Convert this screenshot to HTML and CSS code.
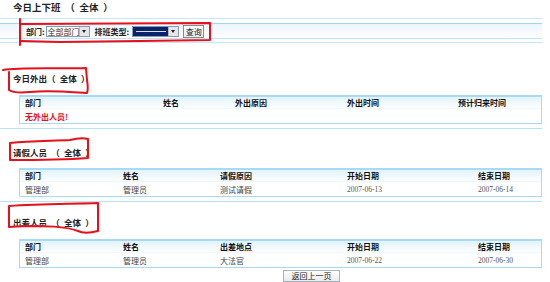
FILE: index.html
```html
<!DOCTYPE html>
<html lang="zh-CN">
<head>
    <meta charset="UTF-8">
    <title>今日上下班</title>
    <link rel="stylesheet" href="styles.css">
</head>
<body>
    <div class="page">
        <div class="page-title">今日上下班&ensp;（&ensp;全体&ensp;）</div>

        <div class="toolbar">
            <div class="toolbar-inner">
                <span class="lbl">部门:</span>
                <span class="select sel-dept"><span class="sel-text">全部部门</span><span class="sel-arrow"></span></span>
                <span class="lbl lbl-type">排班类型:</span>
                <span class="select sel-type"><span class="sel-text sel-active"><i class="dash"></i></span><span class="sel-arrow"></span></span>
                <span class="btn btn-query">查询</span>
            </div>
        </div>

        <!-- 今日外出 -->
        <div class="sec-title sec-out">今日外出（&ensp;全体&ensp;）</div>
        <div class="grid-table t-out">
            <div class="row head">
                <span>部门</span><span>姓名</span><span>外出原因</span><span>外出时间</span><span>预计归来时间</span>
            </div>
            <div class="row">
                <span class="empty">无外出人员!</span>
            </div>
        </div>
        <div class="sep"></div>

        <!-- 请假人员 -->
        <div class="sec-title sec-leave">请假人员&ensp;（&ensp;全体&ensp;）</div>
        <div class="grid-table t-list">
            <div class="row head">
                <span>部门</span><span>姓名</span><span>请假原因</span><span>开始日期</span><span>结束日期</span>
            </div>
            <div class="row">
                <span>管理部</span><span>管理员</span><span>测试请假</span><span class="date">2007-06-13</span><span class="date">2007-06-14</span>
            </div>
        </div>
        <div class="sep"></div>

        <!-- 出差人员 -->
        <div class="sec-title sec-trip">出差人员&ensp;（&ensp;全体&ensp;）</div>
        <div class="grid-table t-list">
            <div class="row head">
                <span>部门</span><span>姓名</span><span>出差地点</span><span>开始日期</span><span>结束日期</span>
            </div>
            <div class="row">
                <span>管理部</span><span>管理员</span><span>大法官</span><span class="date">2007-06-22</span><span class="date">2007-06-30</span>
            </div>
        </div>

        <div class="back">
            <span class="btn btn-back">返回上一页</span>
        </div>
    </div>

    <!-- hand drawn red marks on top of the screenshot -->
    <svg class="marks" width="550" height="282" viewBox="0 0 550 282">
        <g fill="none" stroke="#e8101a" stroke-width="2" stroke-linejoin="round" stroke-linecap="round">
            <path d="M20 19 L20 45"/>
            <path d="M21 24 L210 23 L210 40 L140 41 L60 42 L21 41"/>
            <path d="M3 70 C 20 67, 60 69, 86 68 L 87 80 C 88 86, 88 90, 87 93 C 70 92, 50 90, 30 92 C 20 93, 12 92, 9 90 L 9 72"/>
            <path d="M10 160 L 10 143 C 30 141, 50 141, 70 140 C 78 138, 84 138, 88 139 L 88 158 C 60 160, 30 160, 10 160"/>
            <path d="M9 227 L 9 206 C 40 204, 70 204, 98 203 L 98 231 C 90 233, 82 233, 78 231 C 65 226, 45 226, 25 226 L 9 227"/>
        </g>
    </svg>
</body>
</html>
```

FILE: styles.css
```css
/* Base */
body {
    margin: 0;
    position: relative;
    font-family: "Noto Sans CJK SC", "DejaVu Sans", sans-serif;
    font-size: 8px;
    color: #222;
    background: #fff;
}

.page {
    width: 542px;
}

.page-title {
    height: 14px;
    line-height: 14px;
    padding-left: 13px;
    font-size: 9.5px;
    font-weight: bold;
    color: #222;
    white-space: nowrap;
}

/* Search bar */
.toolbar {
    margin-top: 4px;
    padding: 4px 0 3px;
    border-top: 1px solid #c4e8f8;
    border-bottom: 1px solid #c4e8f8;
}

.toolbar-inner {
    height: 14px;
    border-top: 1px solid #a2d6ef;
    border-bottom: 1px solid #bde5f7;
    background: linear-gradient(#eaf6fc, #fdfeff);
    display: flex;
    align-items: center;
    padding-left: 26px;
}

.lbl {
    font-weight: bold;
    line-height: 11px;
}

.lbl-type {
    margin-left: 5px;
}

.select {
    display: flex;
    height: 11px;
    box-sizing: border-box;
    border: 1px solid #7f9db9;
    background: #fff;
    margin-left: 1px;
}

.sel-dept {
    width: 44px;
}

.sel-type {
    width: 47px;
    margin-left: 3px;
}

.sel-text {
    flex: 1;
    line-height: 9px;
    padding-left: 1px;
    color: #333;
    white-space: nowrap;
    overflow: hidden;
}

.sel-active {
    background: #0a246a;
    display: flex;
    align-items: center;
    justify-content: center;
}

.dash {
    display: block;
    width: 30px;
    height: 0;
    border-top: 1px solid #d8dff0;
}

.sel-arrow {
    width: 9px;
    background: #e6e6e6;
    border-left: 1px solid #b8b8b8;
    position: relative;
}

.sel-arrow::after {
    content: "";
    position: absolute;
    left: 2px;
    top: 3px;
    border-left: 2.5px solid transparent;
    border-right: 2.5px solid transparent;
    border-top: 3px solid #222;
}

.btn {
    display: inline-block;
    box-sizing: border-box;
    border: 1px solid #8a8a8a;
    background: linear-gradient(#fff, #ebebeb);
    text-align: center;
    color: #222;
}

.btn-query {
    width: 21px;
    height: 13px;
    line-height: 11px;
    margin-left: 4px;
}

/* Section headings */
.sec-title {
    height: 12px;
    line-height: 12px;
    padding-left: 13px;
    font-size: 8.5px;
    font-weight: bold;
    color: #222;
    white-space: nowrap;
}

.sec-out {
    margin: 29px 0 11px;
}

.sec-leave {
    margin: 17px 0 10px;
}

.sec-trip {
    margin: 14px 0 11px;
}

/* Lists */
.grid-table {
    margin-left: 19px;
    border: 1px solid #a6dbf3;
    border-top-width: 2px;
}

.row {
    display: grid;
    height: 14px;
    align-items: center;
}

.row span {
    padding-left: 5px;
    white-space: nowrap;
    color: #444;
}

.row.head {
    height: 11px;
    font-weight: bold;
    background: linear-gradient(#e2f3fb, #fcfeff);
    border-bottom: 1px solid #f0f6fa;
}

.row.head span {
    color: #111;
}

.t-out .row {
    grid-template-columns: 138px 72px 112px 111px 1fr;
}

.t-list .row {
    grid-template-columns: 98px 97px 127px 131px 1fr;
}

.row .empty {
    color: #e8101a;
    font-weight: bold;
}

.row .date {
    font-family: "Liberation Serif", serif;
    font-size: 7.5px;
    color: #555;
}

.sep {
    margin-top: 4px;
    border-top: 1px solid #b5e2f6;
}

.back {
    margin-top: 2px;
    padding-left: 283px;
}

.btn-back {
    width: 57px;
    height: 12px;
    line-height: 10px;
    border-color: #9fb3c4;
}

/* Annotation overlay */
.marks {
    position: absolute;
    top: 0;
    left: 0;
    pointer-events: none;
}
```
